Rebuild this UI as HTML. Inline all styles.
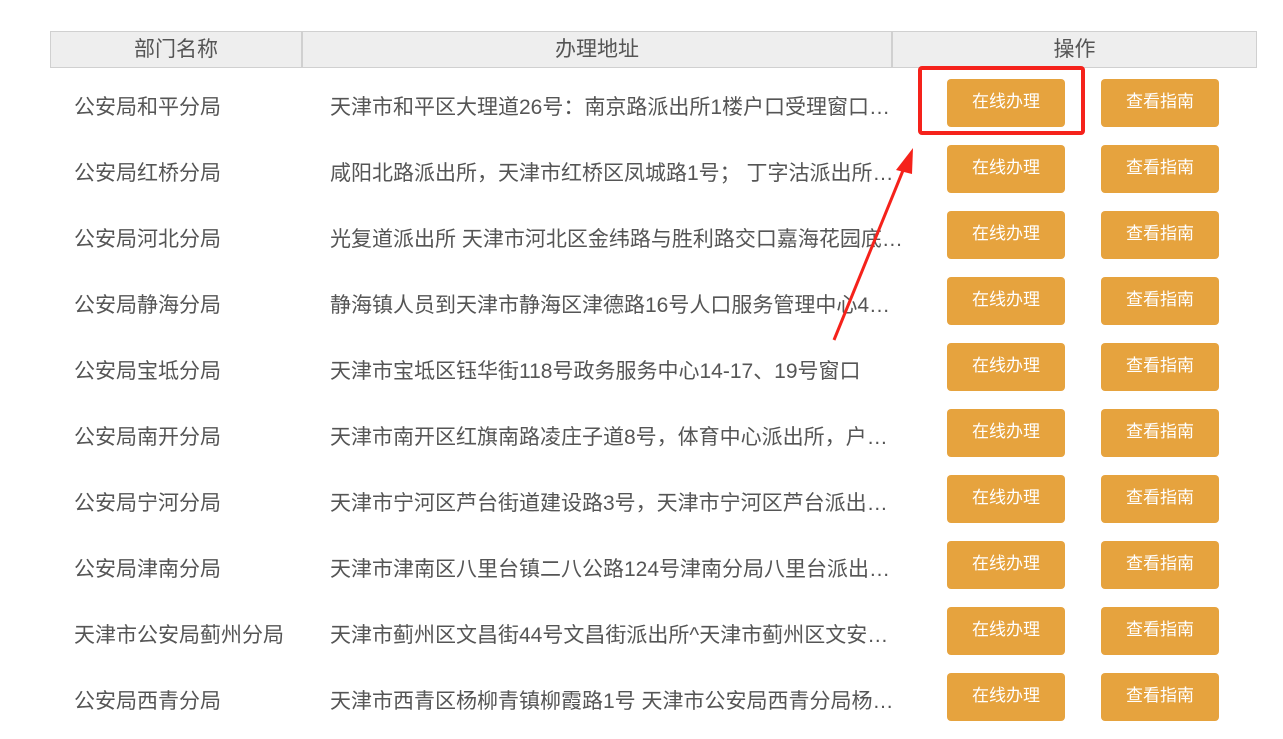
<!DOCTYPE html>
<html><head><meta charset="utf-8"><style>
body{margin:0;width:1283px;height:739px;background:#fff;font-family:"Liberation Sans","Noto Sans CJK SC",sans-serif;position:relative;overflow:hidden}
.hd{position:absolute;top:31px;left:50px;width:1205px;height:35px;background:#eee;border:1px solid #d0d0d0;display:flex;color:#555;font-size:21px;line-height:35px}
.hd div{text-align:center;border-right:2px solid #d0d0d0;box-sizing:border-box}
.hd div:last-child{border-right:none}
.row{position:absolute;left:50px;width:1206px;height:66px;color:#555;font-size:21px}
.n{position:absolute;left:24px;top:2px;line-height:66px;white-space:nowrap}
.a{position:absolute;left:280px;top:2px;width:578px;line-height:66px;white-space:nowrap;overflow:hidden;text-overflow:ellipsis}
.b{position:absolute;top:6px;width:118px;height:48px;background:#e6a33e;border-radius:4px;color:#fff;font-size:17px;line-height:46px;text-align:center}
.b1{left:897px}.b2{left:1051px}
.red{position:absolute;left:918px;top:66px;width:159px;height:61px;border:4px solid #f5221b;border-radius:4px}
</style></head><body>
<div class="hd"><div style="width:252px">部门名称</div><div style="width:590px">办理地址</div><div style="width:363px">操作</div></div>
<div class="row" style="top:73px"><span class="n">公安局和平分局</span><span class="a">天津市和平区大理道26号：南京路派出所1楼户口受理窗口；劝业场派出所</span><span class="b b1">在线办理</span><span class="b b2">查看指南</span></div>
<div class="row" style="top:139px"><span class="n">公安局红桥分局</span><span class="a">咸阳北路派出所，天津市红桥区凤城路1号； 丁字沽派出所，天津市</span><span class="b b1">在线办理</span><span class="b b2">查看指南</span></div>
<div class="row" style="top:205px"><span class="n">公安局河北分局</span><span class="a">光复道派出所 天津市河北区金纬路与胜利路交口嘉海花园底商，天津</span><span class="b b1">在线办理</span><span class="b b2">查看指南</span></div>
<div class="row" style="top:271px"><span class="n">公安局静海分局</span><span class="a">静海镇人员到天津市静海区津德路16号人口服务管理中心4楼窗口</span><span class="b b1">在线办理</span><span class="b b2">查看指南</span></div>
<div class="row" style="top:337px"><span class="n">公安局宝坻分局</span><span class="a">天津市宝坻区钰华街118号政务服务中心14-17、19号窗口</span><span class="b b1">在线办理</span><span class="b b2">查看指南</span></div>
<div class="row" style="top:403px"><span class="n">公安局南开分局</span><span class="a">天津市南开区红旗南路凌庄子道8号，体育中心派出所，户籍窗口</span><span class="b b1">在线办理</span><span class="b b2">查看指南</span></div>
<div class="row" style="top:469px"><span class="n">公安局宁河分局</span><span class="a">天津市宁河区芦台街道建设路3号，天津市宁河区芦台派出所户籍</span><span class="b b1">在线办理</span><span class="b b2">查看指南</span></div>
<div class="row" style="top:535px"><span class="n">公安局津南分局</span><span class="a">天津市津南区八里台镇二八公路124号津南分局八里台派出所户籍</span><span class="b b1">在线办理</span><span class="b b2">查看指南</span></div>
<div class="row" style="top:601px"><span class="n">天津市公安局蓟州分局</span><span class="a">天津市蓟州区文昌街44号文昌街派出所^天津市蓟州区文安街派出所</span><span class="b b1">在线办理</span><span class="b b2">查看指南</span></div>
<div class="row" style="top:667px"><span class="n">公安局西青分局</span><span class="a">天津市西青区杨柳青镇柳霞路1号 天津市公安局西青分局杨柳青派出所</span><span class="b b1">在线办理</span><span class="b b2">查看指南</span></div>
<div class="red"></div>
<svg style="position:absolute;left:0;top:0" width="1283" height="739"><line x1="834" y1="340" x2="904" y2="168" stroke="#f5221b" stroke-width="3"/><polygon points="913,148 896,170 912,174" fill="#f5221b"/></svg>
</body></html>
